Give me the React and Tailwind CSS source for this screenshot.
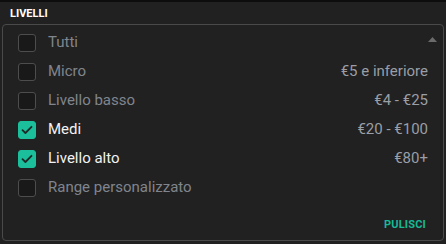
import React, { useState } from "react";

const levels = [
  { id: "all", label: "Tutti", range: "" },
  { id: "micro", label: "Micro", range: "€5 e inferiore" },
  { id: "low", label: "Livello basso", range: "€4 - €25" },
  { id: "mid", label: "Medi", range: "€20 - €100" },
  { id: "high", label: "Livello alto", range: "€80+" },
  { id: "custom", label: "Range personalizzato", range: "" },
];

function Check({ checked }) {
  return (
    <span
      className={
        "flex h-[18px] w-[18px] shrink-0 items-center justify-center rounded-[3px] border " +
        (checked ? "border-[#1bbf9b] bg-[#1bbf9b]" : "border-[#4d4d4d] bg-[#191919]")
      }
    >
      {checked && (
        <svg width="12" height="10" viewBox="0 0 12 10" fill="none">
          <path d="M1.5 5.2 4.4 8 10.5 1.8" stroke="#1d2a27" strokeWidth="1.8" strokeLinecap="round" strokeLinejoin="round" />
        </svg>
      )}
    </span>
  );
}

export default function App() {
  const [selected, setSelected] = useState(["mid", "high"]);
  const toggle = (id) =>
    setSelected((s) => (s.includes(id) ? s.filter((x) => x !== id) : [...s, id]));

  return (
    <div className="h-[244px] w-[446px] overflow-hidden bg-[#212121] font-['Roboto',sans-serif]">
      <div className="h-[2px] bg-[#0d0d0d]" />
      <div className="px-[10px] pt-[6px] pb-[4px] text-[11px] font-bold leading-[12px] text-white">LIVELLI</div>
      <div className="relative mx-[2px] h-[217px] rounded-[4px] border border-[#4a4a4a] pl-[15px] pr-[15px] pt-[3px]">
        <svg className="absolute right-[6px] top-[12px]" width="9" height="5" viewBox="0 0 9 5">
          <path d="M0 5 4.5 0 9 5Z" fill="#6b6b6b" />
        </svg>
        {levels.map((l) => {
          const on = selected.includes(l.id);
          return (
            <div
              key={l.id}
              onClick={() => toggle(l.id)}
              className="flex h-[29px] cursor-pointer items-center"
            >
              <Check checked={on} />
              <span className={"ml-[12px] text-[15px] " + (on ? "text-[#f2f2f2]" : "text-[#80858d]")}>{l.label}</span>
              <span className="ml-auto text-[15px] text-[#9a9ea6]">{l.range}</span>
            </div>
          );
        })}
        <div className="flex justify-end pt-[15px]">
          <button onClick={() => setSelected([])} className="pr-[2px] text-[11px] font-bold tracking-[0.2px] text-[#17b897]">
            PULISCI
          </button>
        </div>
      </div>
    </div>
  );
}
